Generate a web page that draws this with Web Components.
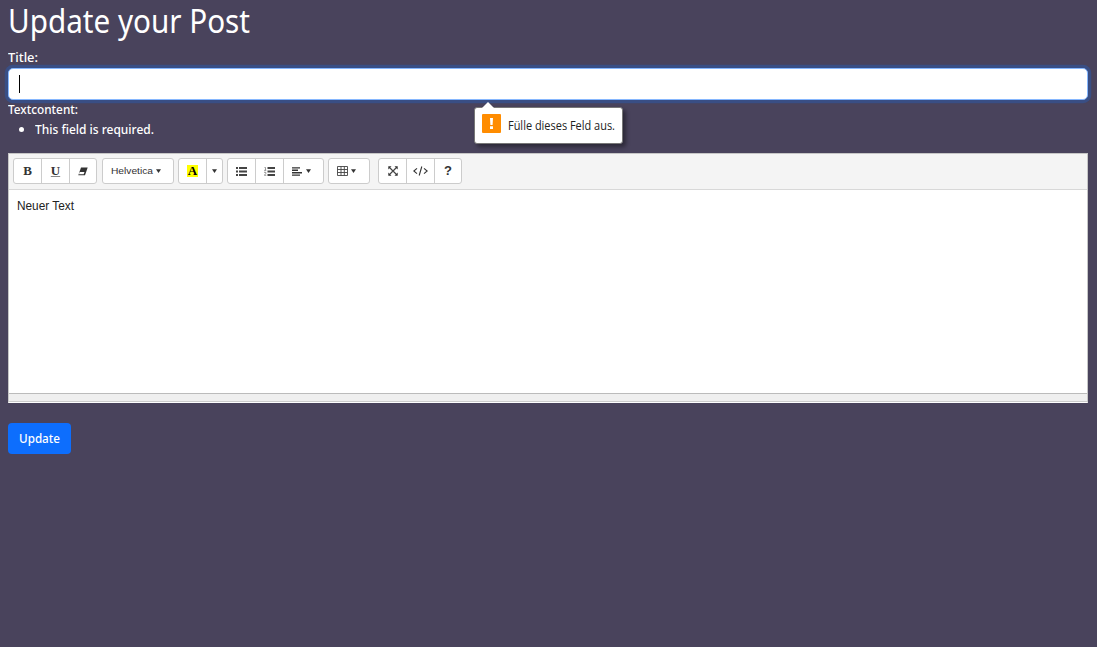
<!DOCTYPE html>
<html lang="de">
<head>
<meta charset="utf-8">
<title>Update your Post</title>
<style>
html,body{margin:0;height:100%}
body{background:#49435c;color:#fff;font:13px/20px "Noto Sans","Open Sans",sans-serif;overflow:hidden}
</style>
</head>
<body>
<post-form></post-form>
<script>
const define = (name, html, ready) => customElements.define(name, class extends HTMLElement {
  connectedCallback() {
    if (this.shadowRoot) return;
    this.attachShadow({mode: 'open'}).innerHTML = html;
    if (ready) ready(this);
  }
});

// Condenses a line of text to the width given in its attribute.
define('fit-text', `<style>
:host{display:block;white-space:nowrap}
span{display:inline-block;transform-origin:0 50%}
</style><span><slot></slot></span>`, el => {
  const w = +el.getAttribute('width'), span = el.shadowRoot.querySelector('span');
  el.style.width = w + 'px';
  span.style.transform = `scaleX(${w / span.getBoundingClientRect().width})`;
});

define('title-input', `<style>
:host{display:block;box-sizing:border-box;height:32px;border:1px solid #86b7fe;border-radius:5px;background:#fff;box-shadow:0 0 0 3.25px rgba(13,110,253,.25);padding:6px 10px}
i{display:block;width:1px;height:18px;background:#000}
</style><i></i>`);

define('validation-bubble', `<style>
:host{position:absolute;left:474px;top:107px;box-sizing:border-box;width:149px;height:37px;display:flex;align-items:flex-start;padding:6px 7px;background:#fff;border:1px solid #777;border-radius:3px;box-shadow:3px 3px 4px rgba(0,0,0,.4);color:#222;font:12px/18px "Open Sans",sans-serif}
.tip{position:absolute;left:7px;top:-7px}
.mark{width:19px;height:19px;margin-right:7px;flex:none}
fit-text{margin-top:3px}
</style><svg class="tip" width="12" height="8"><path d="M0 7 6 1l6 6v1H0z" fill="#fff"/></svg>
<svg class="mark" viewBox="0 0 19 19"><rect width="19" height="19" rx="1" fill="#ff8c00"/><path d="M8 4h3l-.4 7H8.4zM8 12.2h3V15H8z" fill="#fff"/></svg>
<fit-text width="107"><slot></slot></fit-text>`);

define('tool-group', `<style>:host{display:flex;box-sizing:border-box;height:26px;border:1px solid #ccc;border-radius:3px;background:#fff;overflow:hidden}</style><slot></slot>`);

define('tool-button', `<style>
:host{display:flex;box-sizing:border-box;align-items:center;justify-content:center;height:24px;color:#333;font:9.5px/14px "Liberation Sans",Arial,sans-serif}
:host([divided]){border-left:1px solid #ccc}
::slotted(svg){display:block;flex:none}
</style><slot></slot>`, el => el.style.width = el.getAttribute('width') + 'px');

define('caret-down', `<style>:host{display:block;width:5px;height:4px}svg{display:block}</style><svg width="5" height="4"><path d="M0 .2h5L2.5 4z" fill="#333"/></svg>`);

define('editor-toolbar', `<style>
:host{display:flex;box-sizing:border-box;height:36px;padding:4px;background:#f4f4f4;border-bottom:1px solid #d8d8d8}
tool-group{margin-right:5px}
.table{margin-right:8px}.color{margin-right:4px}.font,.lists{margin-right:4px}
b{font:bold 13px/14px "Liberation Serif",serif}
.u{text-decoration:underline #888 1px;text-underline-offset:1px}
.a{background:#ff0;color:#000;padding:0 1px;height:12px;line-height:12px}
caret-down{margin-left:3px}
.alone caret-down{margin:0}
.q{font:bold 13px/14px "Liberation Sans",sans-serif}
.pull{padding-right:5px}
</style>
<tool-group><tool-button width="27"><b>B</b></tool-button><tool-button width="28" divided><b class="u">U</b></tool-button>
<tool-button width="27" divided><svg width="10" height="9"><path d="M3 .5h6.7L7 8.3H.3z" fill="#333"/><path d="M1.7 5h4.8l-.8 2.2H.9z" fill="#fff"/></svg></tool-button></tool-group>
<tool-group class="font"><tool-button class="pull" width="70" style="padding-right:4px"><fit-text width="42">Helvetica</fit-text><caret-down></caret-down></tool-button></tool-group>
<tool-group class="color"><tool-button width="27"><b class="a">A</b></tool-button><tool-button class="alone" width="16" divided><caret-down></caret-down></tool-button></tool-group>
<tool-group class="lists"><tool-button width="27"><svg width="11" height="9"><path d="M0 0h2v2H0zM0 3.5h2v2H0zM0 7h2v2H0zM3 0h8v2H3zM3 3.5h8v2H3zM3 7h8v2H3z" fill="#444"/></svg></tool-button>
<tool-button width="28" divided><svg width="11" height="9"><path d="M.5.5h1v2.8M0 3.3h2.3M0 5.3h1.8v1.2L.3 8.3h2" fill="none" stroke="#555" stroke-width=".6"/><path d="M3.5 0H11v2H3.5zM3.5 3.5H11v2H3.5zM3.5 7H11v2H3.5z" fill="#444"/></svg></tool-button>
<tool-button class="pull" width="40" divided><svg width="10" height="9"><path d="M0 .2h8v1.4H0zM0 2.6h6V4H0zM0 5h10v1.4H0zM0 7.4h8v1.4H0z" fill="#333"/></svg><caret-down style="margin-left:4px"></caret-down></tool-button></tool-group>
<tool-group class="table"><tool-button class="pull" width="40"><svg width="11" height="10"><path d="M.5.5h10v9H.5zM4 .5v9M7.3.5v9M.5 3.5h10M.5 6.5h10" fill="none" stroke="#444" stroke-width=".9"/></svg><caret-down></caret-down></tool-button></tool-group>
<tool-group><tool-button width="27"><svg width="10" height="10"><path d="m1.5 1.5 7 7m0-7-7 7" stroke="#444" stroke-width="1.2"/><path d="M.3.3h3.2L.3 3.5zM9.7.3H6.5l3.2 3.2zM.3 9.7h3.2L.3 6.5zM9.7 9.7H6.5l3.2-3.2z" fill="#333"/></svg></tool-button>
<tool-button width="28" divided><svg width="15" height="10"><path d="M4 2.3.8 5 4 7.7M11 2.3 14.2 5 11 7.7M8.8.5 6.2 9.5" fill="none" stroke="#333" stroke-width="1.1"/></svg></tool-button>
<tool-button width="27" divided><span class="q">?</span></tool-button></tool-group>`);

define('text-editor', `<style>
:host{display:flex;flex-direction:column;box-sizing:border-box;height:250px;background:#fff;border:1px solid #c6c6c6;border-bottom-color:#fff}
main{flex:1;padding:8px 8px;color:#222;font:12px/16px "Liberation Sans",Arial,sans-serif}
footer{box-sizing:border-box;height:9px;background:#efefef;border-top:1px solid #bbb;border-bottom:1px solid #ccc}
</style><editor-toolbar></editor-toolbar><main><fit-text width="57"><slot></slot></fit-text></main><footer></footer>`);

define('submit-button', `<style>
:host{display:flex;box-sizing:border-box;width:63px;height:31px;padding:5px 11px;border-radius:4px;background:#0d6efd;color:#fff;line-height:20px;font-weight:500}
</style><fit-text width="41"><slot></slot></fit-text>`);

define('post-form', `<style>
:host{display:block;padding:0 9px 0 8px}
h1{margin:0;padding-top:2px;height:46px;box-sizing:border-box;font-size:32px;line-height:38px;font-weight:400}
label{display:block;height:20px;line-height:18px;font-weight:500}
ul{margin:0 0 13px;padding:0 0 0 27px;height:20px;line-height:18px;font-weight:500}
submit-button{margin-top:20px}
</style>
<h1><fit-text width="242">Update your Post</fit-text></h1>
<label style="margin-top:2px"><fit-text width="30">Title:</fit-text></label>
<title-input></title-input>
<label><fit-text width="70">Textcontent:</fit-text></label>
<ul><li><fit-text width="119">This field is required.</fit-text></li></ul>
<text-editor>Neuer Text</text-editor>
<submit-button>Update</submit-button>
<validation-bubble>Fülle dieses Feld aus.</validation-bubble>`);
</script>
</body>
</html>
